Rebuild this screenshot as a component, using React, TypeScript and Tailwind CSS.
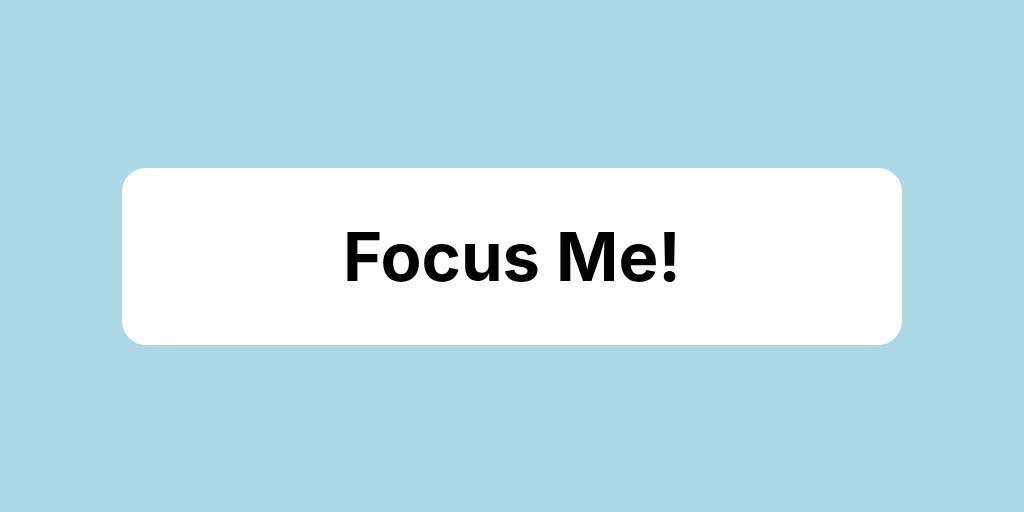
export default function App() {
  return (
    <div className="w-[1024px] h-[512px] bg-[#add8e6] flex items-center justify-center">
      <div
        className="w-[780px] h-[177px] bg-white rounded-[24px] flex items-center justify-center"
        style={{ fontFamily: "Inter, 'Liberation Sans', sans-serif" }}
      >
        <span className="text-[67px] font-bold text-black leading-none">Focus Me!</span>
      </div>
    </div>
  )
}
